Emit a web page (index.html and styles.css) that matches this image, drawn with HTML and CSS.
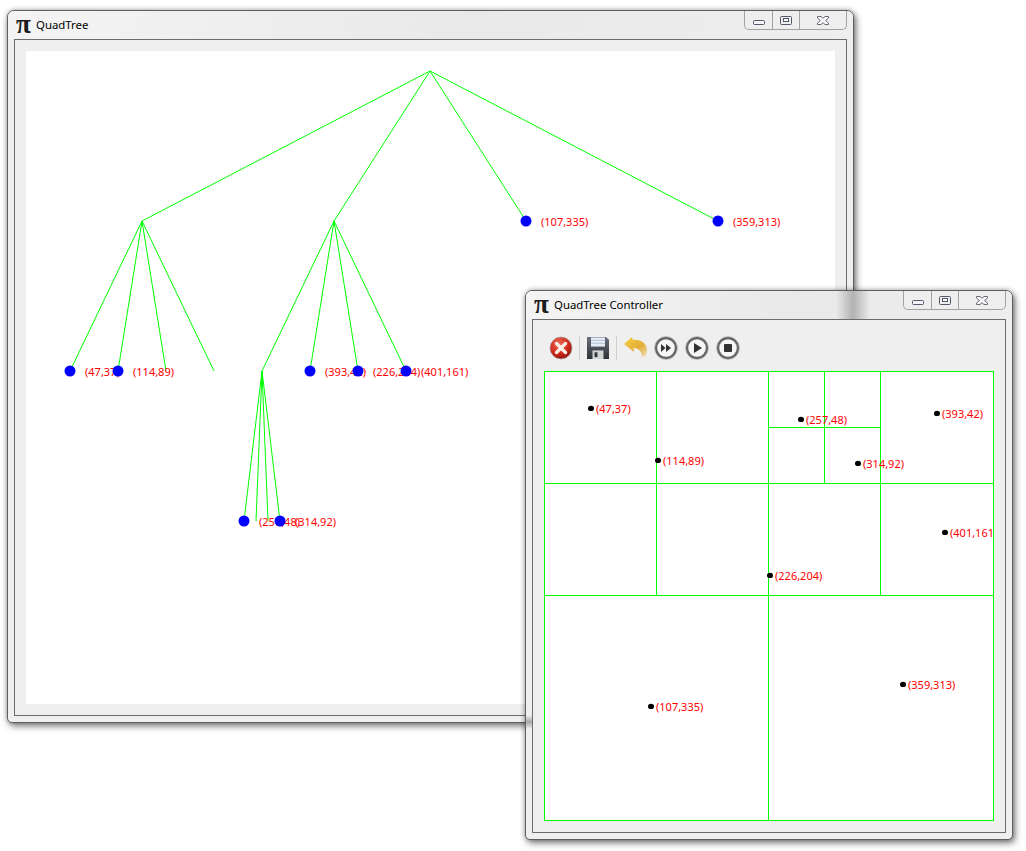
FILE: index.html
```html
<!DOCTYPE html>
<html lang="en">
<head>
  <meta charset="UTF-8">
  <title>QuadTree</title>
  <link rel="stylesheet" href="styles.css">
</head>
<body>
  <!-- tree window -->
  <div class="window tree-window">
    <div class="titlebar">
      <span class="app-icon">π</span>
      <span class="title">QuadTree</span>
      <div class="caption">
        <button class="cap cap-min"><svg width="12" height="5" viewBox="0 0 12 5"><rect x="0.5" y="0.5" width="11" height="4" rx="1" fill="#f4f4f8" stroke="#55586a"/></svg></button>
        <button class="cap cap-max"><svg width="12" height="9" viewBox="0 0 12 9"><rect x="0.5" y="0.5" width="11" height="8" rx="1" fill="none" stroke="#55586a"/><rect x="3.5" y="2.5" width="5" height="3" fill="#fff" stroke="#55586a"/></svg></button>
        <button class="cap cap-close"><svg width="12" height="9" viewBox="0 0 12 9"><path d="M.5 .5H4L6 2.3L8 .5H11.5V2L8.6 4.5L11.5 7V8.5H8L6 6.7L4 8.5H.5V7L3.4 4.5L.5 2Z" fill="#f6f6f6" stroke="#6a6c78"/></svg></button>
      </div>
    </div>
    <div class="frame tree-frame">
      <svg class="canvas" width="809" height="653" viewBox="26 51 809 653">
        <g class="edges">
          <line x1="430" y1="71" x2="142" y2="221"/>
          <line x1="430" y1="71" x2="334" y2="221"/>
          <line x1="430" y1="71" x2="526" y2="221"/>
          <line x1="430" y1="71" x2="718" y2="221"/>
          <line x1="142" y1="221" x2="70" y2="371"/>
          <line x1="142" y1="221" x2="118" y2="371"/>
          <line x1="142" y1="221" x2="166" y2="371"/>
          <line x1="142" y1="221" x2="214" y2="371"/>
          <line x1="334" y1="221" x2="262" y2="371"/>
          <line x1="334" y1="221" x2="310" y2="371"/>
          <line x1="334" y1="221" x2="358" y2="371"/>
          <line x1="334" y1="221" x2="406" y2="371"/>
          <line x1="262" y1="371" x2="244" y2="521"/>
          <line x1="262" y1="371" x2="256" y2="521"/>
          <line x1="262" y1="371" x2="268" y2="521"/>
          <line x1="262" y1="371" x2="280" y2="521"/>
        </g>
        <g class="labels">
          <text x="85" y="376">(47,37)</text>
          <text x="133" y="376">(114,89)</text>
          <text x="325" y="376">(393,42)</text>
          <text x="373" y="376">(226,204)</text>
          <text x="421" y="376">(401,161)</text>
          <text x="259" y="526">(257,48)</text>
          <text x="295" y="526">(314,92)</text>
          <text x="541" y="226">(107,335)</text>
          <text x="733" y="226">(359,313)</text>
        </g>
        <g class="nodes">
          <circle cx="70" cy="371" r="5.5"/>
          <circle cx="118" cy="371" r="5.5"/>
          <circle cx="310" cy="371" r="5.5"/>
          <circle cx="358" cy="371" r="5.5"/>
          <circle cx="406" cy="371" r="5.5"/>
          <circle cx="244" cy="521" r="5.5"/>
          <circle cx="280" cy="521" r="5.5"/>
          <circle cx="526" cy="221" r="5.5"/>
          <circle cx="718" cy="221" r="5.5"/>
        </g>
      </svg>
    </div>
  </div>

  <!-- controller window -->
  <div class="window ctrl-window">
    <div class="glass-shadow"></div>
    <div class="side-shadow"></div>
    <div class="titlebar">
      <span class="app-icon">π</span>
      <span class="title">QuadTree Controller</span>
      <div class="caption">
        <button class="cap cap-min"><svg width="12" height="5" viewBox="0 0 12 5"><rect x="0.5" y="0.5" width="11" height="4" rx="1" fill="#f4f4f8" stroke="#55586a"/></svg></button>
        <button class="cap cap-max"><svg width="12" height="9" viewBox="0 0 12 9"><rect x="0.5" y="0.5" width="11" height="8" rx="1" fill="none" stroke="#55586a"/><rect x="3.5" y="2.5" width="5" height="3" fill="#fff" stroke="#55586a"/></svg></button>
        <button class="cap cap-close"><svg width="12" height="9" viewBox="0 0 12 9"><path d="M.5 .5H4L6 2.3L8 .5H11.5V2L8.6 4.5L11.5 7V8.5H8L6 6.7L4 8.5H.5V7L3.4 4.5L.5 2Z" fill="#f6f6f6" stroke="#6a6c78"/></svg></button>
      </div>
    </div>
    <div class="frame ctrl-frame">
      <div class="toolbar">
        <svg class="tool" width="24" height="24" viewBox="0 0 24 24">
          <defs>
            <radialGradient id="redBall" cx="40%" cy="30%" r="75%"><stop offset="0" stop-color="#ee6a56"/><stop offset=".6" stop-color="#d0281a"/><stop offset="1" stop-color="#8c130c"/></radialGradient>
          </defs>
          <circle cx="12" cy="12" r="11" fill="url(#redBall)" stroke="#a9a4a0" stroke-width=".8"/>
          <path d="M7.5 7.5L16.5 16.5M16.5 7.5L7.5 16.5" stroke="#fbeee6" stroke-width="3.4" stroke-linecap="round"/>
        </svg>
        <span class="tool-sep sep-first"></span>
        <svg class="tool disk" width="22" height="22" viewBox="0 0 22 23" preserveAspectRatio="none">
          <defs>
            <linearGradient id="diskBody" x1="0" y1="0" x2="0" y2="1"><stop offset="0" stop-color="#68707c"/><stop offset="1" stop-color="#2e3238"/></linearGradient>
          </defs>
          <path d="M0 0H19L22 3V23H0Z" fill="url(#diskBody)"/>
          <rect x="4" y="0.5" width="14" height="9.5" fill="#e4ecf6"/>
          <path d="M4 3.5H18M4 6.5H18" stroke="#b4c2d4"/>
          <rect x="5.5" y="14" width="11" height="9" fill="#d2d4d6"/>
          <rect x="7.5" y="16" width="3" height="5" fill="#33373c"/>
        </svg>
        <span class="tool-sep"></span>
        <svg class="tool undo" width="23" height="21" viewBox="0 0 23 21">
          <defs>
            <linearGradient id="undoArrow" x1="0" y1="0" x2="1" y2="1"><stop offset="0" stop-color="#f6d040"/><stop offset=".6" stop-color="#e2ad38"/><stop offset="1" stop-color="#f1e4c0"/></linearGradient>
          </defs>
          <path d="M0 8L8 1L9 4C17 3 23 8 23 14C23 17 22 19.5 20 21C19.5 21 18 20.5 17.5 19C17.5 15 14 12 9.5 12L10 16Z" fill="url(#undoArrow)"/>
        </svg>
        <svg class="tool round" width="24" height="24" viewBox="0 0 24 24">
          <circle cx="12" cy="12" r="10" fill="#f6f6f6" stroke="#666" stroke-width="2.4"/>
          <circle cx="12" cy="12" r="11.5" fill="none" stroke="#b8b8b8" stroke-width=".8"/>
          <path d="M7 8L11.5 12L7 16ZM12 8L17 12L12 16Z" fill="#333"/>
        </svg>
        <svg class="tool round" width="24" height="24" viewBox="0 0 24 24">
          <circle cx="12" cy="12" r="10" fill="#f6f6f6" stroke="#666" stroke-width="2.4"/>
          <circle cx="12" cy="12" r="11.5" fill="none" stroke="#b8b8b8" stroke-width=".8"/>
          <path d="M9 7L17 12L9 17Z" fill="#333"/>
        </svg>
        <svg class="tool round" width="24" height="24" viewBox="0 0 24 24">
          <circle cx="12" cy="12" r="10" fill="#f6f6f6" stroke="#666" stroke-width="2.4"/>
          <circle cx="12" cy="12" r="11.5" fill="none" stroke="#b8b8b8" stroke-width=".8"/>
          <rect x="8" y="8" width="8" height="8" rx="1" fill="#333"/>
        </svg>
      </div>
      <svg class="plot" width="450" height="450" viewBox="0 0 450 450">
        <g class="cells">
          <rect x="0.5" y="0.5" width="449" height="449"/>
          <line x1="224.5" y1="0" x2="224.5" y2="450"/>
          <line x1="0" y1="224.5" x2="450" y2="224.5"/>
          <line x1="112.5" y1="0" x2="112.5" y2="225"/>
          <line x1="0" y1="112.5" x2="450" y2="112.5"/>
          <line x1="336.5" y1="0" x2="336.5" y2="225"/>
          <line x1="280.5" y1="0" x2="280.5" y2="113"/>
          <line x1="224" y1="56.5" x2="337" y2="56.5"/>
        </g>
        <g class="points">
          <ellipse cx="47" cy="37.4" rx="3" ry="2.6"/>
          <ellipse cx="114" cy="89.4" rx="3" ry="2.6"/>
          <ellipse cx="257" cy="48.4" rx="3" ry="2.6"/>
          <ellipse cx="393" cy="42.4" rx="3" ry="2.6"/>
          <ellipse cx="314" cy="92.4" rx="3" ry="2.6"/>
          <ellipse cx="401" cy="161.4" rx="3" ry="2.6"/>
          <ellipse cx="226" cy="204.4" rx="3" ry="2.6"/>
          <ellipse cx="107" cy="335.4" rx="3" ry="2.6"/>
          <ellipse cx="359" cy="313.4" rx="3" ry="2.6"/>
        </g>
        <g class="labels">
          <text x="52" y="42">(47,37)</text>
          <text x="119" y="94">(114,89)</text>
          <text x="262" y="53">(257,48)</text>
          <text x="398" y="47">(393,42)</text>
          <text x="319" y="97">(314,92)</text>
          <text x="406" y="166">(401,161)</text>
          <text x="231" y="209">(226,204)</text>
          <text x="112" y="340">(107,335)</text>
          <text x="364" y="318">(359,313)</text>
        </g>
      </svg>
    </div>
  </div>
</body>
</html>
```

FILE: styles.css
```css
body {
  margin: 0;
  width: 1026px;
  height: 851px;
  position: relative;
  overflow: hidden;
  background: #fff;
  font-family: "Noto Sans", sans-serif;
}

/* windows sit on a free desktop */
.window {
  position: absolute;
  box-sizing: border-box;
  display: flex;
  flex-direction: column;
  padding: 0 6px 6px;
  background: #efefef;
  border: 1px solid #5f5f5f;
  border-radius: 7px 7px 5px 5px;
  box-shadow: 2px 3px 7px rgba(0, 0, 0, .5), 0 0 5px rgba(0, 0, 0, .25);
}

.tree-window {
  left: 7px;
  top: 10px;
  width: 847px;
  height: 713px;
}

.ctrl-window {
  left: 525px;
  top: 290px;
  width: 488px;
  height: 550px;
}

.titlebar {
  display: flex;
  align-items: flex-start;
  height: 28px;
  flex: none;
  background: linear-gradient(100deg, #f4f4f4, #e9e9e9 55%, #eeeeee);
  margin: 0 -6px;
  padding: 0 6px 0 8px;
  border-radius: 6px 6px 0 0;
}

.app-icon {
  width: 20px;
  font-family: "Liberation Serif", serif;
  font-weight: bold;
  font-size: 27px;
  line-height: 26px;
  color: #1c1c1c;
}

.title {
  font-size: 11.4px;
  line-height: 28px;
  color: #000;
}

.caption {
  display: flex;
  margin-left: auto;
  height: 19px;
  box-sizing: border-box;
  border: 1px solid #a2a2a2;
  border-top: 0;
  border-radius: 0 0 5px 5px;
  background: #eeeeee;
}

.cap {
  display: flex;
  align-items: flex-start;
  justify-content: center;
  padding: 5px 0 0;
  border: 0;
  border-right: 1px solid #a2a2a2;
  background: none;
}

.cap-min {
  width: 28px;
  padding-top: 9px;
}

.cap-max {
  width: 27px;
}

.cap-close {
  width: 46px;
  border-right: 0;
}

.frame {
  flex: 1;
  min-height: 0;
  border: 1px solid #6c6c6c;
  background: #efefef;
}

.tree-frame {
  padding: 11px;
}

.canvas {
  display: block;
  background: #fff;
}

.edges line {
  stroke: #00ff00;
  stroke-width: 1;
}

.labels text {
  fill: #ff0000;
  font-family: "Noto Sans", sans-serif;
  font-size: 11px;
}

.nodes circle {
  fill: #0000ff;
}

.ctrl-frame {
  display: flex;
  flex-direction: column;
  padding: 0 11px;
}

.toolbar {
  display: flex;
  align-items: center;
  height: 51px;
  flex: none;
  padding-top: 4px;
  box-sizing: border-box;
  padding-left: 5px;
}

.tool {
  flex: none;
}

.undo {
  margin-bottom: 2px;
}

.tool-sep {
  width: 1px;
  height: 24px;
  margin: 0 7px;
  background: #cfcfcf;
}

.sep-first {
  margin-left: 6px;
}

.round {
  margin-left: 7px;
}

.plot {
  display: block;
  flex: none;
  background: #fff;
}

.cells rect {
  fill: none;
  stroke: #00ff00;
}

.cells line {
  stroke: #00ff00;
}

.points ellipse {
  fill: #000;
}

/* shadow of the window behind showing through the glass */
.glass-shadow {
  position: absolute;
  left: 310px;
  top: 0;
  width: 34px;
  height: 28px;
  background: linear-gradient(90deg, rgba(0,0,0,0), rgba(0,0,0,.24) 50%, rgba(0,0,0,0));
  pointer-events: none;
}

.side-shadow {
  position: absolute;
  left: 0;
  top: 424px;
  width: 6px;
  height: 14px;
  background: linear-gradient(180deg, rgba(0,0,0,0), rgba(0,0,0,.3) 50%, rgba(0,0,0,0));
  pointer-events: none;
}
```
